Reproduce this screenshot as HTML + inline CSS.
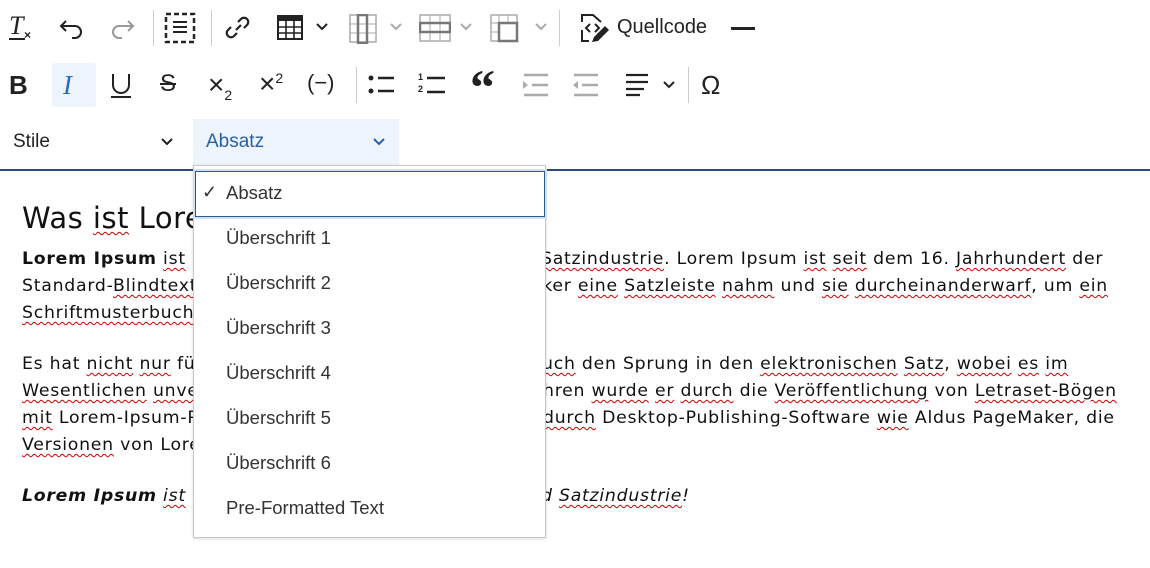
<!DOCTYPE html>
<html><head><meta charset="utf-8"><style>
*{margin:0;padding:0;box-sizing:border-box}
body{width:1150px;height:568px;background:#fff;position:relative;overflow:hidden;font-family:"Liberation Sans",sans-serif}
.a{position:absolute}
.t{position:absolute;font-family:"DejaVu Sans",sans-serif;font-size:17.3px;letter-spacing:0.75px;color:#111;white-space:nowrap;line-height:20px}
.sp{text-decoration:underline wavy #c00;text-decoration-thickness:1px;text-underline-offset:3px}
svg.i{position:absolute}
.sep{position:absolute;width:1px;background:#ccc}
.item{position:absolute;left:32px;font-size:18.5px;color:#333;white-space:nowrap}
</style></head><body>

<!-- Row 1 -->
<div class="a" style="left:9px;top:13px;font-family:'Liberation Serif',serif;font-style:italic;font-size:26px;color:#222;line-height:26px">T</div>
<div class="a" style="left:9px;top:38px;width:16px;height:1.5px;background:#222"></div>
<div class="a" style="left:24px;top:28px;font-size:12px;color:#222;font-weight:bold">×</div>
<svg class="i" style="left:58px;top:15px" width="28" height="26" viewBox="0 0 28 26"><path d="M8 6 L3 11 L8 16 M3 11 H17 a6 6 0 0 1 0 12 H14" fill="none" stroke="#222" stroke-width="2"/></svg>
<svg class="i" style="left:108px;top:15px" width="28" height="26" viewBox="0 0 28 26"><path d="M20 6 L25 11 L20 16 M25 11 H11 a6 6 0 0 0 0 12 H14" fill="none" stroke="#999" stroke-width="2"/></svg>
<div class="sep" style="left:153px;top:10px;height:36px"></div>
<svg class="i" style="left:164px;top:12px" width="32" height="32"><rect x="2" y="2" width="28" height="28" fill="none" stroke="#222" stroke-width="2.5" stroke-dasharray="5 3"/><path d="M9 10H23M9 15H23M9 20H23" stroke="#222" stroke-width="2"/></svg>
<div class="sep" style="left:211px;top:10px;height:36px"></div>
<svg class="i" style="left:224px;top:14px" width="28" height="28"><path d="M12 16 L17 11 M14 8 l3-3 a4 4 0 0 1 6 6 l-3 3 M13 19 l-3 3 a4 4 0 0 1 -6 -6 l3 -3" fill="none" stroke="#222" stroke-width="2.2"/></svg>
<svg class="i" style="left:277px;top:15px" width="26" height="26"><rect x="1" y="1" width="24" height="23" fill="none" stroke="#222" stroke-width="2"/><rect x="1" y="1" width="24" height="5" fill="#222"/><path d="M1 12H25M1 18H25M9 6V24M17 6V24" stroke="#222" stroke-width="1.6"/></svg>
<svg class="i" style="left:315px;top:22px" width="14" height="10"><path d="M2 2L7 7L12 2" fill="none" stroke="#222" stroke-width="2"/></svg>
<svg class="i" style="left:349px;top:14px" width="28" height="30"><rect x="1" y="1" width="26" height="27" fill="none" stroke="#aaa" stroke-width="1.5"/><path d="M1 10H27M1 19H27" stroke="#aaa"/><rect x="9" y="1" width="9" height="28" fill="none" stroke="#777" stroke-width="2.5"/></svg>
<svg class="i" style="left:389px;top:22px" width="14" height="10"><path d="M2 2L7 7L12 2" fill="none" stroke="#aaa" stroke-width="2"/></svg>
<svg class="i" style="left:419px;top:14px" width="32" height="28"><rect x="1" y="1" width="30" height="26" fill="none" stroke="#aaa" stroke-width="1.5"/><path d="M11 1V27M21 1V27" stroke="#aaa"/><rect x="1" y="9" width="30" height="9" fill="none" stroke="#777" stroke-width="2.5"/></svg>
<svg class="i" style="left:459px;top:22px" width="14" height="10"><path d="M2 2L7 7L12 2" fill="none" stroke="#aaa" stroke-width="2"/></svg>
<svg class="i" style="left:490px;top:14px" width="30" height="30"><rect x="1" y="1" width="26" height="26" fill="none" stroke="#aaa" stroke-width="1.5"/><path d="M1 9H27M9 1V27M1 18H9M18 1V9" stroke="#aaa"/><rect x="9" y="9" width="18" height="18" fill="none" stroke="#777" stroke-width="2.5"/></svg>
<svg class="i" style="left:534px;top:22px" width="14" height="10"><path d="M2 2L7 7L12 2" fill="none" stroke="#aaa" stroke-width="2"/></svg>
<div class="sep" style="left:559px;top:10px;height:36px"></div>
<svg class="i" style="left:579px;top:12px" width="34" height="32"><path d="M3 10V3H14L22 10 M3 18V29H10" fill="none" stroke="#222" stroke-width="2"/><path d="M11 12L7 16L11 20 M16 12L20 16L16 20" fill="none" stroke="#222" stroke-width="2"/><path d="M13 30L15 25L26 14L30 18L19 29Z" fill="#222"/></svg>
<div class="a" style="left:617px;top:16px;font-size:20px;color:#222">Quellcode</div>
<div class="a" style="left:731px;top:27px;width:24px;height:3px;background:#222"></div>

<!-- Row 2 -->
<div class="a" style="left:9px;top:70px;font-size:26px;font-weight:bold;color:#222">B</div>
<div class="a" style="left:52px;top:63px;width:44px;height:44px;background:#eef4fb;border-radius:3px"></div>
<div class="a" style="left:63px;top:70px;font-family:'Liberation Serif',serif;font-style:italic;font-size:27px;color:#2a6ac0">I</div>
<svg class="i" style="left:110px;top:72px" width="24" height="28"><path d="M3 2V13a8 8 0 0 0 16 0V2" fill="none" stroke="#222" stroke-width="2"/><path d="M1 25H21" stroke="#222" stroke-width="2"/></svg>
<div class="a" style="left:160px;top:70px;font-size:24px;color:#222;text-decoration:line-through">S</div>
<div class="a" style="left:208px;top:69px;font-size:28px;color:#222">×<span style="font-size:14px;position:relative;top:6px">2</span></div>
<div class="a" style="left:259px;top:68px;font-size:28px;color:#222">×<span style="font-size:14px;position:relative;top:-10px">2</span></div>
<div class="a" style="left:307px;top:70px;font-size:22px;color:#222">(−)</div>
<div class="sep" style="left:356px;top:67px;height:36px"></div>
<svg class="i" style="left:367px;top:73px" width="30" height="24"><circle cx="4" cy="5" r="2.5" fill="#222"/><circle cx="4" cy="18" r="2.5" fill="#222"/><path d="M11 5H27M11 18H27" stroke="#222" stroke-width="2.5"/></svg>
<div class="a" style="left:418px;top:71px;font-size:9px;font-weight:bold;line-height:12px;color:#222">1<br>2</div>
<svg class="i" style="left:425px;top:73px" width="22" height="24"><path d="M2 5H20M2 19H20" stroke="#222" stroke-width="2.5"/></svg>
<div class="a" style="left:470px;top:62px;font-family:'Liberation Serif',serif;font-size:50px;font-weight:bold;color:#222;line-height:50px">“</div>
<svg class="i" style="left:520px;top:73px" width="30" height="24"><path d="M4 2H28M12 12H28M4 22H28" stroke="#aaa" stroke-width="2.5"/><path d="M3 8L8 12L3 16Z" fill="#aaa"/></svg>
<svg class="i" style="left:570px;top:73px" width="30" height="24"><path d="M4 2H28M12 12H28M4 22H28" stroke="#aaa" stroke-width="2.5"/><path d="M8 8L3 12L8 16Z" fill="#aaa"/></svg>
<svg class="i" style="left:624px;top:73px" width="28" height="24"><path d="M2 2H24M2 9H24M2 16H20M2 22H16" stroke="#222" stroke-width="2.2"/></svg>
<svg class="i" style="left:662px;top:80px" width="14" height="10"><path d="M2 2L7 7L12 2" fill="none" stroke="#222" stroke-width="2"/></svg>
<div class="sep" style="left:688px;top:67px;height:36px"></div>
<div class="a" style="left:701px;top:70px;font-size:26px;color:#222">Ω</div>

<!-- Row 3 -->
<div class="a" style="left:13px;top:131px;font-size:19px;color:#222">Stile</div>
<svg class="i" style="left:160px;top:137px" width="14" height="10"><path d="M2 2L7 7L12 2" fill="none" stroke="#222" stroke-width="2"/></svg>
<div class="a" style="left:193px;top:119px;width:206px;height:47px;background:#eef4fb"></div>
<div class="a" style="left:206px;top:131px;font-size:19px;color:#2a5fa8">Absatz</div>
<svg class="i" style="left:372px;top:137px" width="14" height="10"><path d="M2 2L7 7L12 2" fill="none" stroke="#2a5fa8" stroke-width="2"/></svg>
<div class="a" style="left:0;top:169px;width:1150px;height:2px;background:#2b4a78"></div>

<!-- Content -->
<div class="t" style="left:22px;top:202px;font-size:29px;letter-spacing:0.5px;line-height:32px">Was <span class="sp">ist</span> Lorem Ipsum?</div>
<div class="t" style="left:22px;top:249px"><b>Lorem Ipsum</b> <span class="sp">ist</span> ein</div>
<div class="t" style="left:523px;top:249px">d <span class="sp">Satzindustrie</span>. Lorem Ipsum <span class="sp">ist</span> <span class="sp">seit</span> dem 16. <span class="sp">Jahrhundert</span> der</div>
<div class="t" style="left:22px;top:276px">Standard-<span class="sp">Blindtext</span> in</div>
<div class="t" style="left:532px;top:276px">cker <span class="sp">eine</span> <span class="sp">Satzleiste</span> <span class="sp">nahm</span> und <span class="sp">sie</span> <span class="sp">durcheinanderwarf</span>, um <span class="sp">ein</span></div>
<div class="t" style="left:22px;top:303px"><span class="sp">Schriftmusterbuch</span> zu</div>
<div class="t" style="left:22px;top:354px">Es hat <span class="sp">nicht</span> <span class="sp">nur</span> fünf</div>
<div class="t" style="left:542px;top:354px"><span class="sp">uch</span> den Sprung in den <span class="sp">elektronischen</span> <span class="sp">Satz</span>, <span class="sp">wobei</span> <span class="sp">es</span> <span class="sp">im</span></div>
<div class="t" style="left:22px;top:381px"><span class="sp">Wesentlichen</span> <span class="sp">unverändert</span></div>
<div class="t" style="left:543px;top:381px">hren <span class="sp">wurde</span> <span class="sp">er</span> <span class="sp">durch</span> die <span class="sp">Veröffentlichung</span> von <span class="sp">Letraset-Bögen</span></div>
<div class="t" style="left:22px;top:408px"><span class="sp">mit</span> Lorem-Ipsum-Passagen</div>
<div class="t" style="left:543px;top:408px"><span class="sp">durch</span> Desktop-Publishing-Software <span class="sp">wie</span> Aldus PageMaker, die</div>
<div class="t" style="left:22px;top:435px"><span class="sp">Versionen</span> von Lorem</div>
<div class="t" style="left:22px;top:486px;font-style:italic"><b>Lorem Ipsum</b> <span class="sp">ist</span> ein</div>
<div class="t" style="left:541px;top:486px;font-style:italic">d <span class="sp">Satzindustrie</span>!</div>

<!-- Dropdown -->
<div class="a" style="left:193px;top:165px;width:353px;height:373px;background:#fff;border:1px solid #c8c8c8;box-shadow:0 1px 3px rgba(0,0,0,.15)">
  <div class="a" style="left:1px;top:5px;width:350px;height:46px;border:1.5px solid #2b5a8f;box-shadow:0 0 0 2px #cfe0f5;background:#fff"></div>
  <div class="a" style="left:8px;top:16px;font-size:18px;color:#333">✓</div>
  <div class="item" style="top:16px">Absatz</div>
  <div class="item" style="top:61px">Überschrift 1</div>
  <div class="item" style="top:106px">Überschrift 2</div>
  <div class="item" style="top:151px">Überschrift 3</div>
  <div class="item" style="top:196px">Überschrift 4</div>
  <div class="item" style="top:241px">Überschrift 5</div>
  <div class="item" style="top:286px">Überschrift 6</div>
  <div class="item" style="top:331px">Pre-Formatted Text</div>
</div>
</body></html>
